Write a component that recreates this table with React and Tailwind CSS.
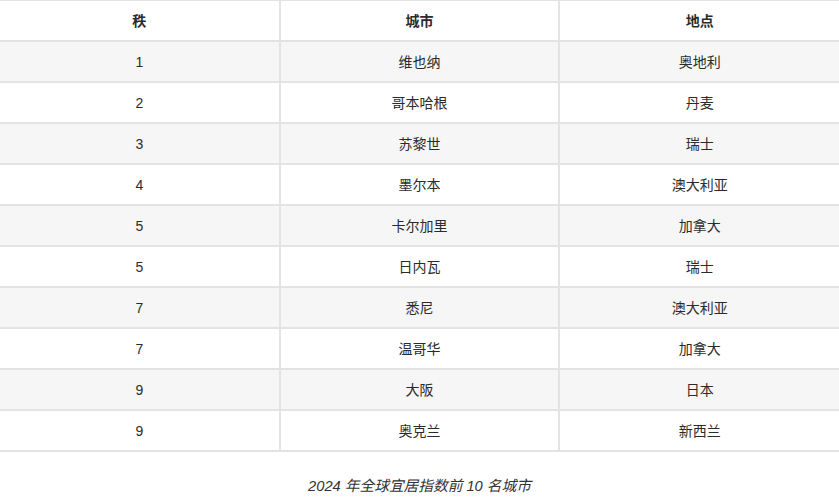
const rows = [
  ['1', '维也纳', '奥地利'],
  ['2', '哥本哈根', '丹麦'],
  ['3', '苏黎世', '瑞士'],
  ['4', '墨尔本', '澳大利亚'],
  ['5', '卡尔加里', '加拿大'],
  ['5', '日内瓦', '瑞士'],
  ['7', '悉尼', '澳大利亚'],
  ['7', '温哥华', '加拿大'],
  ['9', '大阪', '日本'],
  ['9', '奥克兰', '新西兰'],
];

export default function App() {
  return (
    <div
      className="w-[839px] h-[500px] bg-white text-[#2b2b2b] overflow-hidden"
      style={{ fontFamily: '"Liberation Sans", "Noto Sans CJK SC", sans-serif' }}
    >
      <table className="w-full table-fixed border-collapse text-[14px] -mt-[1px]">
        <thead>
          <tr className="h-[41px]">
            <th className="border-2 border-l-0 border-[#e2e4e2] font-bold pt-[1px]">秩</th>
            <th className="border-2 border-[#e2e4e2] font-bold pt-[1px]">城市</th>
            <th className="border-2 border-r-0 border-[#e2e4e2] font-bold pt-[1px]">地点</th>
          </tr>
        </thead>
        <tbody>
          {rows.map((r, i) => (
            <tr key={i} className={`h-[41px] ${i % 2 === 0 ? 'bg-[#f5f6f5]' : 'bg-white'}`}>
              <td className="border-2 border-l-0 border-[#e2e4e2] text-center pt-[1px]">{r[0]}</td>
              <td className="border-2 border-[#e2e4e2] text-center pt-[1px]">{r[1]}</td>
              <td className="border-2 border-r-0 border-[#e2e4e2] text-center pt-[1px]">{r[2]}</td>
            </tr>
          ))}
        </tbody>
      </table>
      <div className="mt-[23px] text-center italic text-[14.7px] text-[#333]">
        2024 年全球宜居指数前 10 名城市
      </div>
    </div>
  );
}
